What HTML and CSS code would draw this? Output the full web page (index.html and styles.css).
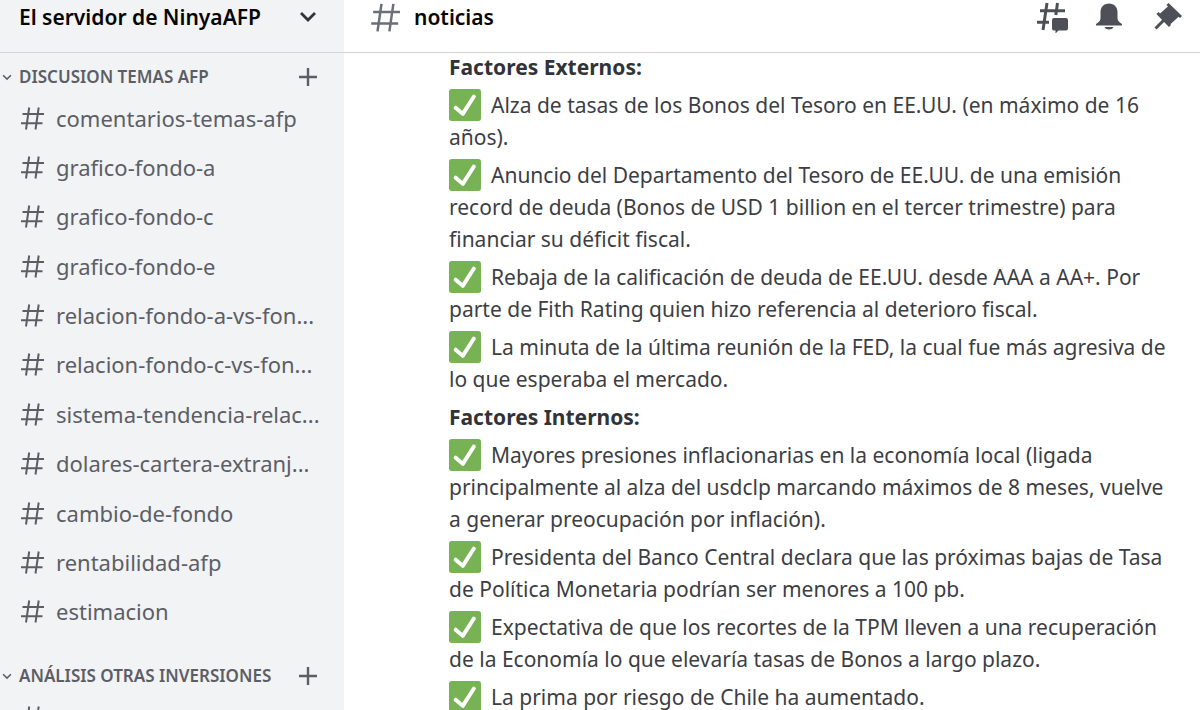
FILE: index.html
```
<!DOCTYPE html>
<html lang="es">
<head>
    <meta charset="UTF-8">
    <meta name="viewport" content="width=device-width, initial-scale=1.0">
    <title>noticias - El servidor de NinyaAFP</title>
    <link rel="stylesheet" href="styles.css">
</head>
<body>
    <svg class="symbols" aria-hidden="true">
        <symbol id="hash" viewBox="0 0 24 24">
            <path d="M9.200 1.500 6 23.500M18.700 1.500 15.500 23.500M2.500 8H24M1 17.200H22.500" fill="none" stroke="currentColor" stroke-width="2"/>
        </symbol>
        <symbol id="arrow" viewBox="0 0 18 12">
            <path d="M2 2 9 9 16 2" fill="none" stroke="currentColor" stroke-width="2.800"/>
        </symbol>
        <symbol id="plus" viewBox="0 0 18 18">
            <path d="M9 0V18M0 9H18" stroke="currentColor" stroke-width="2.400"/>
        </symbol>
        <symbol id="check" viewBox="0 0 36 36">
            <rect width="36" height="36" rx="3" fill="#77b255"/>
            <path d="M7.500 21 15.500 28 28 8.500" fill="none" stroke="#fff" stroke-width="4.400" stroke-linecap="round" stroke-linejoin="round"/>
        </symbol>
    </svg>

    <aside class="sidebar">
        <header class="bar">
            <button class="server" type="button">
                El servidor de NinyaAFP
                <svg class="server-arrow"><use href="#arrow"/></svg>
            </button>
        </header>
        <nav>
            <div class="category">
                <button class="category-name" type="button"><svg><use href="#arrow"/></svg>DISCUSION TEMAS AFP</button>
                <button class="add" type="button" aria-label="Crear canal"><svg><use href="#plus"/></svg></button>
            </div>
            <ul class="channels">
                <li><a href="#"><svg><use href="#hash"/></svg><span>comentarios-temas-afp</span></a></li>
                <li><a href="#"><svg><use href="#hash"/></svg><span>grafico-fondo-a</span></a></li>
                <li><a href="#"><svg><use href="#hash"/></svg><span>grafico-fondo-c</span></a></li>
                <li><a href="#"><svg><use href="#hash"/></svg><span>grafico-fondo-e</span></a></li>
                <li><a href="#"><svg><use href="#hash"/></svg><span>relacion-fondo-a-vs-fon...</span></a></li>
                <li><a href="#"><svg><use href="#hash"/></svg><span>relacion-fondo-c-vs-fon...</span></a></li>
                <li><a href="#"><svg><use href="#hash"/></svg><span>sistema-tendencia-relac...</span></a></li>
                <li><a href="#"><svg><use href="#hash"/></svg><span>dolares-cartera-extranj...</span></a></li>
                <li><a href="#"><svg><use href="#hash"/></svg><span>cambio-de-fondo</span></a></li>
                <li><a href="#"><svg><use href="#hash"/></svg><span>rentabilidad-afp</span></a></li>
                <li><a href="#"><svg><use href="#hash"/></svg><span>estimacion</span></a></li>
            </ul>
            <div class="category">
                <button class="category-name" type="button"><svg><use href="#arrow"/></svg>ANÁLISIS OTRAS INVERSIONES</button>
                <button class="add" type="button" aria-label="Crear canal"><svg><use href="#plus"/></svg></button>
            </div>
            <ul class="channels next">
                <li><a href="#" aria-label="Canal"><svg><use href="#hash"/></svg></a></li>
            </ul>
        </nav>
    </aside>

    <main class="chat">
        <header class="bar">
            <svg class="title-hash"><use href="#hash"/></svg>
            <h1>noticias</h1>
            <div class="tools">
                <button type="button" aria-label="Hilos">
                    <svg viewBox="0 0 32 32">
                        <path d="M11 2 7 29M21.500 2 19.800 14M4 9.700H29M1 21.300H13" fill="none" stroke="currentColor" stroke-width="3"/>
                        <path d="M18 17H30Q32 17 32 19V27.500Q32 29.500 30 29.500H22.500L19.500 32.500V29.500H18Q16 29.500 16 27.500V19Q16 17 18 17Z" fill="currentColor"/>
                    </svg>
                </button>
                <button type="button" aria-label="Notificaciones">
                    <svg viewBox="0 0 32 32">
                        <path d="M15 2.500C10 2.500 6.500 6 6.500 11V17C6.500 20 4.500 21 2 23V24.500H28V23C25.500 21 23.500 20 23.500 17V11C23.500 6 20 2.500 15 2.500ZM10.500 26H19.500C18.500 27.800 17 28.500 15 28.500S11.500 27.800 10.500 26Z" fill="currentColor"/>
                    </svg>
                </button>
                <button type="button" aria-label="Mensajes fijados">
                    <svg viewBox="0 0 32 32">
                        <path d="M17 4.500 27.500 15 18 23.500 7.500 13Z" fill="currentColor"/>
                        <path d="M15.500 3 29 16M5.500 12 18 25M13 18 3.500 27.500" fill="none" stroke="currentColor" stroke-width="3"/>
                    </svg>
                </button>
            </div>
        </header>
        <article class="message">
            <h2>Factores Externos:</h2>
            <ul>
                <li><svg><use href="#check"/></svg>Alza de tasas de los Bonos del Tesoro en EE.UU. (en máximo de 16 años).</li>
                <li><svg><use href="#check"/></svg>Anuncio del Departamento del Tesoro de EE.UU. de una emisión record de deuda (Bonos de USD 1 billion en el tercer trimestre) para financiar su déficit fiscal.</li>
                <li><svg><use href="#check"/></svg>Rebaja de la calificación de deuda de EE.UU. desde AAA a AA+. Por parte de Fith Rating quien hizo referencia al deterioro fiscal.</li>
                <li><svg><use href="#check"/></svg>La minuta de la última reunión de la FED, la cual fue más agresiva de lo que esperaba el mercado.</li>
            </ul>
            <h2>Factores Internos:</h2>
            <ul>
                <li><svg><use href="#check"/></svg>Mayores presiones inflacionarias en la economía local (ligada principalmente al alza del usdclp marcando máximos de 8 meses, vuelve a generar preocupación por inflación).</li>
                <li><svg><use href="#check"/></svg>Presidenta del Banco Central declara que las próximas bajas de Tasa de Política Monetaria podrían ser menores a 100 pb.</li>
                <li><svg><use href="#check"/></svg>Expectativa de que los recortes de la TPM lleven a una recuperación de la Economía lo que elevaría tasas de Bonos a largo plazo.</li>
                <li><svg><use href="#check"/></svg>La prima por riesgo de Chile ha aumentado.</li>
            </ul>
        </article>
    </main>
</body>
</html>
```
FILE: styles.css
```
* {
    box-sizing: border-box;
}
body {
    font-family: "Noto Sans", sans-serif;
    font-size: 21px;
    line-height: 32px;
    color: #3c3e44;
    background: #fff;
    margin: 0;
    display: flex;
    height: 100vh;
    overflow: hidden;
}
h1, h2, ul {
    margin: 0;
    padding: 0;
    list-style: none;
}
button {
    font: inherit;
    color: inherit;
    background: none;
    border: none;
    padding: 0;
    cursor: pointer;
}
.symbols {
    position: absolute;
    width: 0;
    height: 0;
}
.bar {
    display: flex;
    align-items: center;
    height: 53px;
    padding-bottom: 18px;
    border-bottom: 1px solid #d2d3d6;
    color: #060607;
}

/* Sidebar */
.sidebar {
    flex: 0 0 344px;
    background: #f2f3f5;
    color: #5c5e66;
    overflow: hidden;
}
.server {
    display: flex;
    flex: 1;
    align-items: center;
    justify-content: space-between;
    padding: 0 27px 0 19px;
    font-size: 21px;
    font-weight: 600;
}
.server-arrow {
    width: 18px;
    height: 12px;
    color: #313338;
}
.category {
    display: flex;
    align-items: center;
    justify-content: space-between;
    height: 48px;
    padding: 0 27px 0 2px;
}
.category-name {
    display: flex;
    align-items: center;
    gap: 7px;
    font-size: 17px;
    font-weight: 600;
}
.category-name svg {
    width: 10px;
    height: 7px;
}
.add svg {
    display: block;
    width: 18px;
    height: 18px;
}
.channels {
    display: grid;
    grid-auto-rows: 1fr;
    height: 543px;
    margin-top: -8px;
    margin-bottom: 16px;
}
.channels.next {
    height: 49px;
}
.channels a {
    display: flex;
    align-items: center;
    gap: 12px;
    height: 100%;
    padding: 0 20px;
    color: inherit;
    font-size: 22px;
    text-decoration: none;
    white-space: nowrap;
}
.channels svg {
    flex: none;
    width: 24px;
    height: 24px;
}

/* Chat */
.chat {
    flex: 1;
    min-width: 0;
}
.chat .bar {
    padding-left: 26px;
    padding-right: 16px;
}
.title-hash {
    width: 30px;
    height: 30px;
    color: #6d6f78;
}
h1 {
    margin-left: 14px;
    font-size: 21px;
    font-weight: 600;
}
.tools {
    display: flex;
    gap: 26px;
    margin-left: auto;
    color: #4e5058;
}
.tools svg {
    display: block;
    width: 32px;
    height: 32px;
}
.message {
    margin-top: -2px;
    padding: 0 24px 0 105px;
}
.message h2 {
    font-size: 21px;
    font-weight: 700;
    color: #313338;
}
.message li,
.message ul + h2 {
    margin-top: 6px;
}
.message li svg {
    width: 32px;
    height: 32px;
    margin-right: 10px;
    vertical-align: bottom;
}
```
